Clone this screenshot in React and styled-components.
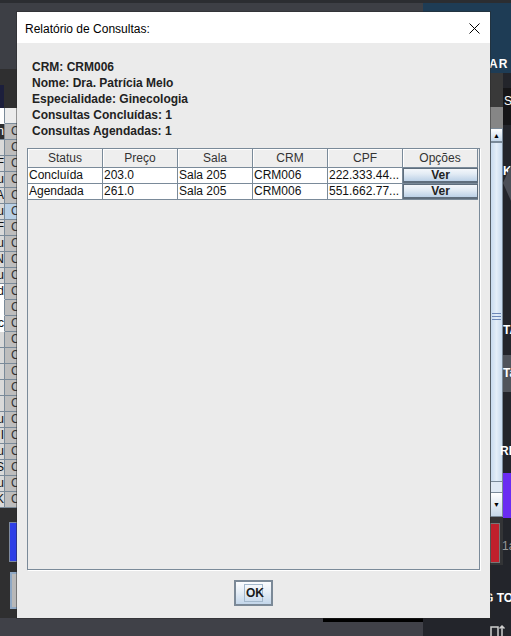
import React from "react";
import styled, { createGlobalStyle } from "styled-components";

const GlobalStyle = createGlobalStyle`
  html, body { margin: 0; padding: 0; background: #3d3f45; overflow: hidden; }
  #root { width: 511px; height: 636px; }
  * { box-sizing: border-box; }
`;

const GRID = "#7a8a99";

const Desktop = styled.div`
  position: relative;
  width: 511px;
  height: 636px;
  overflow: hidden;
  background: #3d3f45;
  font-family: "Liberation Sans", Arial, sans-serif;
  -webkit-font-smoothing: none;
`;

/* ---------- desktop background (windows behind the dialog) ---------- */
const TopShade = styled.div`
  position: absolute; left: 0; top: 0; width: 511px; height: 3px; background: #2b2d31;
`;
const TealPanel = styled.div`
  position: absolute; left: 423px; top: 3px; width: 88px; height: 70px;
  background: #1e3c55;
`;
const TealHeading = styled.span`
  position: absolute; left: 66px; top: 54px;
  color: #fff; font-weight: bold; font-size: 12px; letter-spacing: 1px;
`;
const BottomLeft = styled.div`
  position: absolute; left: 0; top: 618px; width: 423px; height: 18px; background: #404148;
`;
const BottomRight = styled.div`
  position: absolute; left: 423px; top: 618px; width: 88px; height: 18px; background: #23252b;
`;
const BlackBar = styled.div`
  position: absolute; left: 323px; top: 618px; width: 100px; height: 4px; background: #000;
`;
const TrayIcon = styled.svg`
  position: absolute; left: 490px; top: 624px;
`;

/* left background window */
const LeftWindow = styled.div`
  position: absolute; left: 0; top: 69px; width: 30px; height: 549px;
  background: #2f2f30;
  display: flex; flex-direction: column;
`;
const LeftTop = styled.div`
  height: 39px; display: flex; align-items: flex-end;
`;
const NavyTab = styled.div`
  width: 4px; height: 23px; background: #1c1f3c;
`;
const LeftRow = styled.div`
  display: flex; height: 16px;
`;
const LeftCellA = styled.div`
  width: 5px; height: 16px; overflow: hidden;
  background: ${(p) => (p.$dark ? "#2f2f30" : p.$white ? "#ffffff" : "#d9d9d9")};
  color: ${(p) => (p.$dark ? "#fff" : "#111")};
  border-bottom: 1px solid ${(p) => (p.$white ? "#fff" : GRID)};
  border-right: 1px solid ${GRID};
  font-size: 12px; line-height: 15px; direction: rtl; white-space: nowrap;
`;
const LeftCellB = styled.div`
  width: 25px; height: 16px;
  background: ${(p) => (p.$sel ? "#b8cfe5" : p.$head ? "#ececec" : "#bdbdbd")};
  border-bottom: 1px solid ${GRID};
  color: #333; font-size: 12px; line-height: 15px; padding-left: 6px;
`;
const LeftSpacer = styled.div` height: 14px; `;
const BlueButton = styled.div`
  margin-left: 9px; width: 14px; height: 40px;
  background: #2e3fe6; border: 1px solid #7d8aa0;
`;
const GrayButton = styled.div`
  margin-left: 10px; margin-top: 10px; width: 14px; height: 37px;
  background: #b8b8b8; border: 2px solid #8fa8c4;
`;

/* right side background */
const RightDock = styled.div`
  position: absolute; left: 490px; top: 73px; width: 21px; height: 545px;
  background: #23252b;
`;
const RightWindow = styled.div`
  width: 13px; display: flex; flex-direction: column;
`;
const RightPanelTop = styled.div` height: 34px; background: #393939; `;
const ScrollCap = styled.div` height: 21px; background: #868686; `;
const ScrollButton = styled.div`
  height: ${(p) => p.$h}px;
  background: linear-gradient(#ffffff, #c6d8ea);
  border: 1px solid ${GRID};
  display: flex; align-items: center; justify-content: center;
  font-size: 7px; color: #000; line-height: 1;
`;
const ScrollThumb = styled.div`
  height: 340px;
  background: linear-gradient(90deg, #c8dbef, #e4eef8 50%, #c8dbef);
  border: 1px solid ${GRID};
  display: flex; flex-direction: column; align-items: center; justify-content: center; gap: 2px;
  padding-top: 8px;
`;
const GripLine = styled.div` width: 9px; height: 1px; background: #6d88b8; `;
const ScrollTrack = styled.div` height: 10px; background: #dfe9f4; border-left: 1px solid ${GRID}; border-right: 1px solid ${GRID}; `;
const RightPanelBottom = styled.div`
  height: 48px; background: #333436; padding: 6px 0 0 0;
`;
const RedButton = styled.div`
  width: 10px; height: 40px; background: #c0202c; border: 1px solid #777;
`;
const DockLabel = styled.span`
  position: absolute; left: ${(p) => p.$x}px; top: ${(p) => p.$y}px;
  color: ${(p) => p.$c || "#fff"}; font-weight: ${(p) => (p.$thin ? "normal" : "bold")};
  font-size: 12px; white-space: nowrap; line-height: 14px;
`;
const DockBlock = styled.div`
  position: absolute; left: 13px; top: ${(p) => p.$y}px; width: 8px; height: ${(p) => p.$h}px;
  background: ${(p) => p.$bg};
`;
const DockFlag = styled.div`
  position: absolute; left: 13px; top: 92px; width: 0; height: 0;
  border-top: 18px solid transparent; border-bottom: 18px solid transparent;
  border-right: 8px solid #4b4e56;
`;

/* ---------- dialog ---------- */
const Dialog = styled.div`
  position: absolute; left: 17px; top: 12px; width: 473px; height: 606px;
  z-index: 2;
  display: flex; flex-direction: column;
  background: #ebebeb;
  box-shadow: 0 0 0 1px rgba(40, 40, 40, 0.45);
`;
const TitleBar = styled.div`
  height: 31px; flex: none;
  background: #ffffff;
  display: flex; align-items: center; justify-content: space-between;
  padding: 2px 10px 0 8px;
`;
const Title = styled.span`
  font-family: "Liberation Sans", Arial, sans-serif;
  font-size: 12px; color: #000;
`;
const CloseIcon = styled.svg` display: block; `;

const Body = styled.div`
  flex: 1; display: flex; flex-direction: column;
  padding: 16px 10px 12px 10px;
  min-height: 0;
`;
const Info = styled.div`
  padding-left: 5px; margin-bottom: 9px;
  font-weight: bold; font-size: 12px; line-height: 16px; color: #222;
`;
const InfoLine = styled.div` height: 16px; `;

const TablePane = styled.div`
  flex: 1;
  border: 1px solid ${GRID};
  box-shadow: 1px 1px 0 #ffffff;
  background: #ebebeb;
  overflow: hidden;
`;
const TableGrid = styled.div`
  display: grid;
  grid-template-columns: repeat(6, 75px);
`;
const HeadCell = styled.div`
  height: 19px;
  background: #eeeeee;
  border-right: 1px solid ${GRID};
  border-bottom: 1px solid ${GRID};
  box-shadow: inset 1px 1px 0 #ffffff;
  text-align: center; font-size: 12px; line-height: 18px; color: #333;
`;
const Cell = styled.div`
  height: 16px;
  background: #ffffff;
  border-right: 1px solid ${GRID};
  border-bottom: 1px solid ${GRID};
  padding-left: 1px;
  font-size: 12px; line-height: 15px; color: #111;
  white-space: nowrap; overflow: hidden;
`;
const ButtonCell = styled.div`
  height: 16px;
  border-bottom: 1px solid ${GRID};
  background: #ffffff;
`;
const VerButton = styled.div`
  height: 15px;
  border: 1px solid #5f6e7d;
  border-bottom-width: 2px;
  background: linear-gradient(#f4f7fb 0%, #e3ecf5 40%, #bcd1e7 100%);
  text-align: center; font-weight: bold; font-size: 12px; line-height: 12px; color: #222;
`;

const Footer = styled.div`
  display: flex; justify-content: center; margin-top: 10px;
`;
const OkButton = styled.div`
  width: 39px; height: 26px;
  border: 2px solid #7b8997;
  background: linear-gradient(#fbfcfe 0%, #e6eef6 45%, #c3d6ea 100%);
  display: flex; align-items: center; justify-content: center;
`;
const FocusRing = styled.span`
  border: 1px solid #a3b8cc;
  padding: 0 0 0 1px;
  width: 19px; height: 18px;
  font-weight: bold; font-size: 12px; line-height: 16px; color: #1a1a1a;
`;

const info = [
  "CRM: CRM006",
  "Nome: Dra. Patrícia Melo",
  "Especialidade: Ginecologia",
  "Consultas Concluídas: 1",
  "Consultas Agendadas: 1",
];
const headers = ["Status", "Preço", "Sala", "CRM", "CPF", "Opções"];
const rows = [
  ["Concluída", "203.0", "Sala 205", "CRM006", "222.333.44..."],
  ["Agendada", "261.0", "Sala 205", "CRM006", "551.662.77..."],
];

const leftLetters = ["n", "", "F", "u.", "A", "u.", "F", "u.", "N", "u.", "d", "", "c", "", "", "", "", "", "u.", "I", "u.", "S", "u.", "K"];

export default function App() {
  return (
    <Desktop>
      <GlobalStyle />
      <TopShade />
      <TealPanel>
        <TealHeading>AR</TealHeading>
      </TealPanel>

      <LeftWindow>
        <LeftTop>
          <NavyTab />
        </LeftTop>
        <LeftRow>
          <LeftCellA $white />
          <LeftCellB $head />
        </LeftRow>
        {leftLetters.map((l, i) => (
          <LeftRow key={i}>
            <LeftCellA $dark={i === 0} $white={i === 10 || i === 11 || i === 12}>
              {l}
            </LeftCellA>
            <LeftCellB $sel={i === 5}>C</LeftCellB>
          </LeftRow>
        ))}
        <LeftSpacer />
        <BlueButton />
        <GrayButton />
      </LeftWindow>

      <RightDock>
        <RightWindow>
          <RightPanelTop />
          <ScrollCap />
          <ScrollButton $h={14}>▲</ScrollButton>
          <ScrollThumb>
            <GripLine />
            <GripLine />
            <GripLine />
          </ScrollThumb>
          <ScrollTrack />
          <ScrollButton $h={25}>▼</ScrollButton>
          <RightPanelBottom>
            <RedButton />
          </RightPanelBottom>
        </RightWindow>
        <DockBlock $y={15} $h={37} $bg="#161618" />
        <DockLabel $x={14} $y={21} $thin>S</DockLabel>
        <DockLabel $x={13} $y={91}>K</DockLabel>
        <DockFlag />
        <DockLabel $x={13} $y={250}>TA</DockLabel>
        <DockBlock $y={282} $h={37} $bg="#50545b" />
        <DockLabel $x={13} $y={293}>Ta</DockLabel>
        <DockLabel $x={10} $y={371}>RE</DockLabel>
        <DockBlock $y={400} $h={45} $bg="#6a2cf2" />
        <DockLabel $x={12} $y={466} $c="#9a9a9a" $thin>1a</DockLabel>
        <DockLabel $x={-6} $y={518}>G TO</DockLabel>
      </RightDock>

      <BottomLeft />
      <BottomRight />
      <BlackBar />
      <TrayIcon width="16" height="12" viewBox="0 0 16 12">
        <path d="M1 12 V3 H8 V12" fill="none" stroke="#d0d0d0" strokeWidth="1.5" />
        <path d="M12 12 V2 M9.5 4.5 L12 2 L14.5 4.5" fill="none" stroke="#d0d0d0" strokeWidth="1.5" />
      </TrayIcon>

      <Dialog>
        <TitleBar>
          <Title>Relatório de Consultas:</Title>
          <CloseIcon width="11" height="11" viewBox="0 0 11 11">
            <path d="M0.5 0.5 L10.5 10.5 M10.5 0.5 L0.5 10.5" stroke="#000" strokeWidth="1" />
          </CloseIcon>
        </TitleBar>
        <Body>
          <Info>
            {info.map((t) => (
              <InfoLine key={t}>{t}</InfoLine>
            ))}
          </Info>
          <TablePane>
            <TableGrid>
              {headers.map((h) => (
                <HeadCell key={h}>{h}</HeadCell>
              ))}
              {rows.map((r, ri) => (
                <React.Fragment key={ri}>
                  {r.map((c, ci) => (
                    <Cell key={ci}>{c}</Cell>
                  ))}
                  <ButtonCell>
                    <VerButton>Ver</VerButton>
                  </ButtonCell>
                </React.Fragment>
              ))}
            </TableGrid>
          </TablePane>
          <Footer>
            <OkButton>
              <FocusRing>OK</FocusRing>
            </OkButton>
          </Footer>
        </Body>
      </Dialog>
    </Desktop>
  );
}
